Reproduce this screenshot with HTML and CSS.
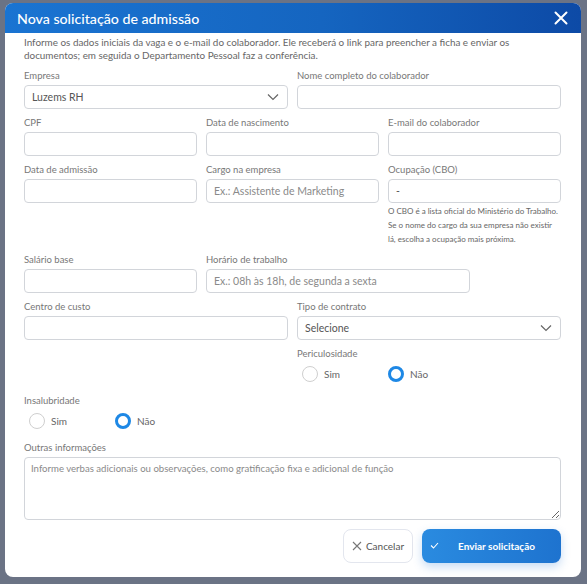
FILE: index.html
```html
<!DOCTYPE html>
<html lang="pt-BR">
<head>
    <meta charset="UTF-8">
    <title>Nova solicitação de admissão</title>
    <link rel="stylesheet" href="styles.css">
</head>
<body>
<div class="backdrop">
    <div class="modal">
        <header class="modal-header">
            <h1>Nova solicitação de admissão</h1>
            <button class="close-btn" type="button" aria-label="Fechar">
                <svg width="14" height="14" viewBox="0 0 14 14"><path d="M1.5 1.5 L12.5 12.5 M12.5 1.5 L1.5 12.5" stroke="#fff" stroke-width="2" stroke-linecap="round"/></svg>
            </button>
        </header>

        <div class="modal-body">
            <p class="intro">Informe os dados iniciais da vaga e o e-mail do colaborador. Ele receberá o link para preencher a ficha e enviar os documentos; em seguida o Departamento Pessoal faz a conferência.</p>

            <form class="grid">
                <div class="field half">
                    <label>Empresa</label>
                    <div class="select">
                        <span>Luzems RH</span>
                        <svg width="12" height="8" viewBox="0 0 12 8"><path d="M1 1.5 L6 6.5 L11 1.5" fill="none" stroke="#666" stroke-width="1.2"/></svg>
                    </div>
                </div>
                <div class="field half">
                    <label>Nome completo do colaborador</label>
                    <input type="text">
                </div>

                <div class="field third">
                    <label>CPF</label>
                    <input type="text">
                </div>
                <div class="field third">
                    <label>Data de nascimento</label>
                    <input type="text">
                </div>
                <div class="field third">
                    <label>E-mail do colaborador</label>
                    <input type="text">
                </div>

                <div class="field third">
                    <label>Data de admissão</label>
                    <input type="text">
                </div>
                <div class="field third">
                    <label>Cargo na empresa</label>
                    <input type="text" placeholder="Ex.: Assistente de Marketing">
                </div>
                <div class="field third">
                    <label>Ocupação (CBO)</label>
                    <input type="text" value="-">
                    <p class="hint">O CBO é a lista oficial do Ministério do Trabalho. Se o nome do cargo da sua empresa não existir lá, escolha a ocupação mais próxima.</p>
                </div>

                <div class="field third">
                    <label>Salário base</label>
                    <input type="text">
                </div>
                <div class="field half">
                    <label>Horário de trabalho</label>
                    <input type="text" placeholder="Ex.: 08h às 18h, de segunda a sexta">
                </div>

                <div class="field half">
                    <label>Centro de custo</label>
                    <input type="text">
                </div>
                <div class="field half">
                    <label>Tipo de contrato</label>
                    <div class="select">
                        <span>Selecione</span>
                        <svg width="12" height="8" viewBox="0 0 12 8"><path d="M1 1.5 L6 6.5 L11 1.5" fill="none" stroke="#666" stroke-width="1.2"/></svg>
                    </div>
                </div>

                <div class="field half"></div>
                <div class="field half">
                    <label>Periculosidade</label>
                    <div class="radios">
                        <span class="radio"><i class="dot"></i>Sim</span>
                        <span class="radio"><i class="dot on"></i>Não</span>
                    </div>
                </div>

                <div class="field half">
                    <label>Insalubridade</label>
                    <div class="radios">
                        <span class="radio"><i class="dot"></i>Sim</span>
                        <span class="radio"><i class="dot on"></i>Não</span>
                    </div>
                </div>

                <div class="field full">
                    <label>Outras informações</label>
                    <textarea placeholder="Informe verbas adicionais ou observações, como gratificação fixa e adicional de função"></textarea>
                </div>
            </form>

            <div class="actions">
                <button type="button" class="btn-cancel">
                    <svg width="10" height="10" viewBox="0 0 10 10"><path d="M1 1 L9 9 M9 1 L1 9" stroke="#777" stroke-width="1.1"/></svg>
                    Cancelar
                </button>
                <button type="button" class="btn-send">
                    <svg class="check" width="9" height="7" viewBox="0 0 9 7"><path d="M1 3.5 L3.5 6 L8 1" fill="none" stroke="#fff" stroke-width="1.1"/></svg>
                    Enviar solicitação
                </button>
            </div>
        </div>
    </div>
</div>
</body>
</html>
```

FILE: styles.css
```css
body {
    margin: 0;
    font-family: Lato, "Open Sans", sans-serif;
    background-color: #6b7385;
}

.backdrop {
    height: 584px;
    padding: 3px 6px 7px 5px;
    box-sizing: border-box;
    background-color: #6b7385;
}

.modal {
    height: 100%;
    background-color: #fff;
    border-radius: 8px;
    overflow: hidden;
    display: flex;
    flex-direction: column;
}

.modal-header {
    height: 30px;
    flex-shrink: 0;
    background: linear-gradient(90deg, #1a74d2 0%, #1565c0 55%, #0d4aa6 100%);
    display: flex;
    align-items: center;
    justify-content: space-between;
    padding: 0 13px 0 12px;
}

.modal-header h1 {
    margin: 0;
    font-size: 14.2px;
    font-weight: 500;
    color: #fff;
}

.close-btn {
    background: none;
    border: none;
    padding: 0;
    display: flex;
    cursor: pointer;
}

.modal-body {
    padding: 3px 20px 0 19px;
}

.intro {
    margin: 0 0 8px;
    font-size: 9.9px;
    line-height: 13px;
    color: #666;
}

.grid {
    display: grid;
    grid-template-columns: repeat(6, 1fr);
    column-gap: 9px;
    row-gap: 8px;
}

.field {
    display: flex;
    flex-direction: column;
}

.field.half {
    grid-column: span 3;
}

.field.third {
    grid-column: span 2;
}

.field.full {
    grid-column: span 6;
}

.field label {
    font-size: 9.5px;
    color: #777;
    height: 12px;
    line-height: 12px;
    margin-bottom: 3px;
}

.field input,
.select {
    height: 24px;
    box-sizing: border-box;
    border: 1px solid #d2d5da;
    border-radius: 4px;
    padding: 0 7px;
    font-family: inherit;
    font-size: 10.5px;
    color: #555;
}

.field input::placeholder,
.field textarea::placeholder {
    color: #8a8a8a;
}

.select {
    display: flex;
    align-items: center;
    justify-content: space-between;
    padding-right: 8px;
}

.hint {
    margin: 1px 0 0;
    font-size: 8px;
    line-height: 14px;
    color: #666;
}

.radios {
    display: flex;
    align-items: center;
    height: 22px;
    margin-bottom: 2px;
    padding-left: 5px;
}

.radio {
    display: flex;
    align-items: center;
    gap: 6px;
    width: 86px;
    font-size: 10px;
    color: #666;
}

.dot {
    width: 16px;
    height: 16px;
    box-sizing: border-box;
    border: 1px solid #cfcfcf;
    border-radius: 50%;
}

.dot.on {
    border: 3px solid #1e88e5;
}

.field textarea {
    height: 63px;
    box-sizing: border-box;
    border: 1px solid #d2d5da;
    border-radius: 4px;
    padding: 5px 6px;
    font-family: inherit;
    font-size: 9.6px;
    resize: vertical;
}

.actions {
    display: flex;
    justify-content: flex-end;
    gap: 9px;
    margin-top: 9px;
}

.btn-cancel {
    height: 34px;
    width: 70px;
    background: #fff;
    border: 1px solid #e3e6ee;
    border-radius: 8px;
    font-family: inherit;
    font-size: 10px;
    color: #555;
    display: flex;
    align-items: center;
    justify-content: center;
    gap: 4px;
    padding: 0;
}

.btn-send {
    position: relative;
    height: 34px;
    width: 139px;
    border: none;
    border-radius: 8px;
    background: linear-gradient(90deg, #2a8be0 0%, #1e73cf 100%);
    box-shadow: 0 4px 10px rgba(30, 115, 210, 0.25);
    font-family: inherit;
    font-size: 10px;
    font-weight: 700;
    color: #fff;
    padding: 0 0 0 10px;
}

.check {
    position: absolute;
    left: 8px;
    top: 13px;
}
```
